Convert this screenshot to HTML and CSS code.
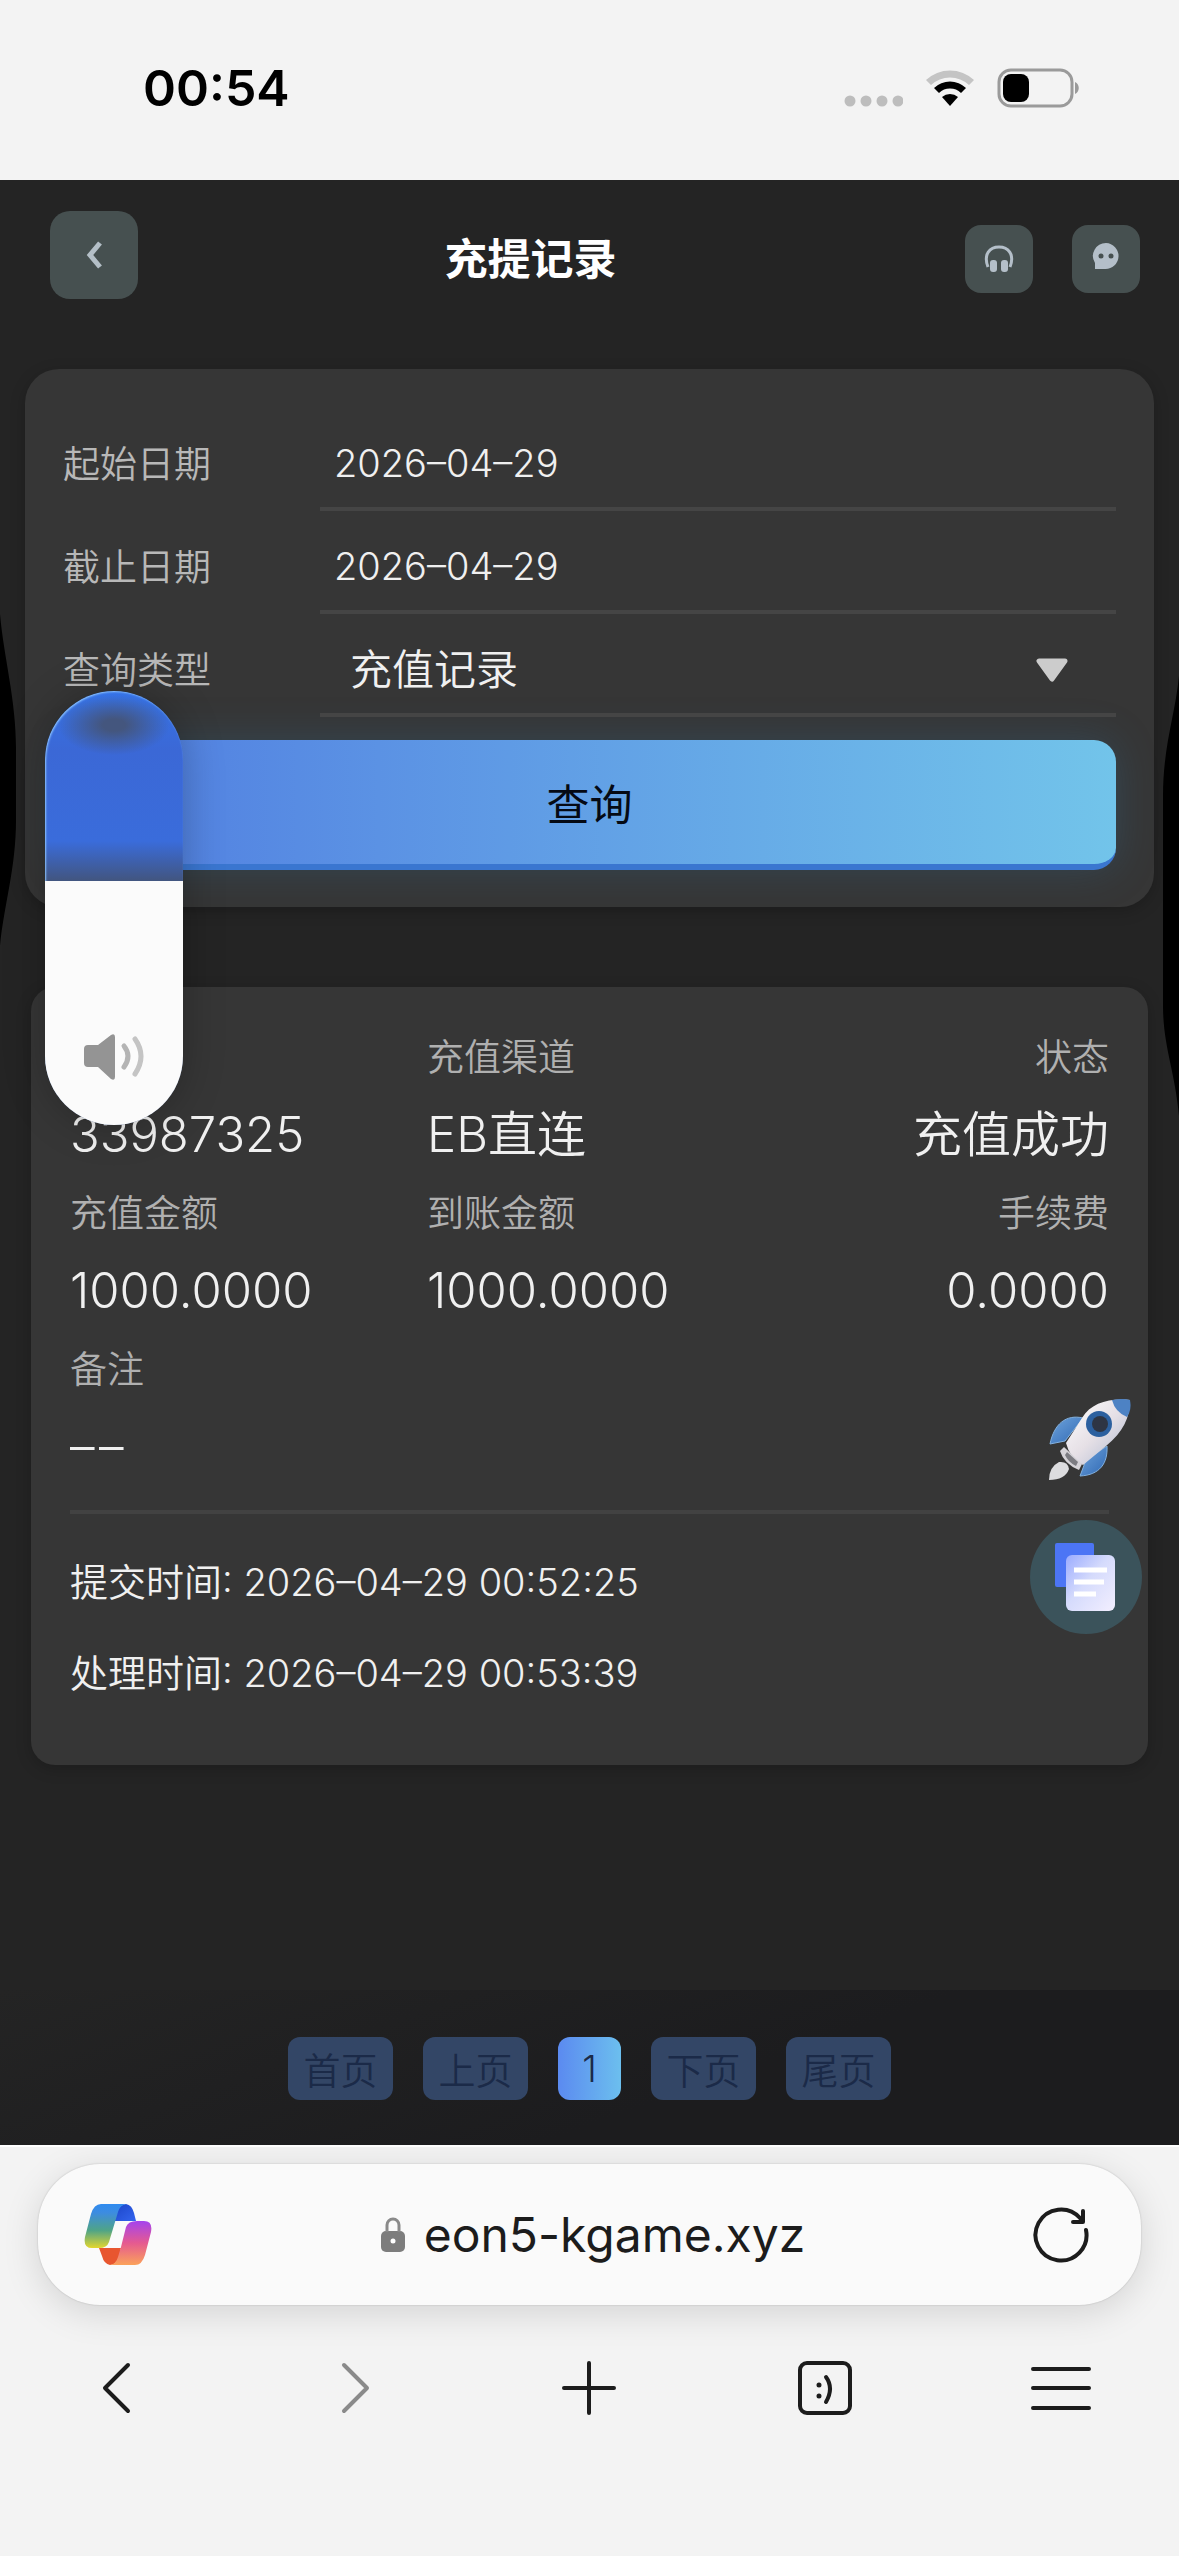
FILE: index.html
```html
<!DOCTYPE html>
<html lang="zh-CN">
<head>
    <meta charset="UTF-8">
    <meta name="viewport" content="width=device-width, initial-scale=1.0">
    <title>充提记录</title>
    <link rel="stylesheet" href="styles.css">
</head>
<body>
    <div class="status-bar">
        <span class="status-time">00:54</span>
        <div class="status-icons">
            <svg width="60" height="40" viewBox="0 0 60 40" fill="#bdbdbd">
                <circle cx="7" cy="33" r="5.5"/><circle cx="23" cy="33" r="5.5"/><circle cx="39" cy="33" r="5.5"/><circle cx="55" cy="33" r="5.5"/>
            </svg>
            <svg width="50" height="40" viewBox="0 0 50 40">
                <path d="M1 12a35 35 0 0 1 48 0l-5 5a28 28 0 0 0-38 0z" fill="#c4c4c4"/>
                <path d="M9 20a23 23 0 0 1 32 0l-5 5a16 16 0 0 0-22 0z" fill="#000"/>
                <path d="M17 29a12 12 0 0 1 16 0l-8 9z" fill="#000"/>
            </svg>
            <svg width="84" height="40" viewBox="0 0 84 40">
                <rect x="2" y="2" width="73" height="36" rx="12" fill="none" stroke="#9a9a9a" stroke-width="3"/>
                <rect x="6" y="6" width="26" height="28" rx="8" fill="#000"/>
                <path d="M78 14c5 2 5 10 0 12z" fill="#9a9a9a"/>
            </svg>
        </div>
    </div>

    <main class="page">
        <svg class="edge edge-left" viewBox="0 0 16 332" preserveAspectRatio="none"><path d="M0 0C4 45 16 85 16 135V205C16 255 4 290 0 332z"/></svg>
        <svg class="edge edge-right" viewBox="0 0 16 440" preserveAspectRatio="none"><path d="M16 0C12 40 0 70 0 120V330C0 370 12 395 16 440z"/></svg>

        <header class="header">
            <button class="back-btn" aria-label="返回">
                <svg width="24" height="32" viewBox="0 0 24 32"><path d="M18 4L8 16L18 28" fill="none" stroke="#b4bfc7" stroke-width="5"/></svg>
            </button>
            <h1 class="title">充提记录</h1>
            <div class="header-actions">
                <button class="icon-btn" aria-label="客服">
                    <svg width="30" height="28" viewBox="0 0 30 28">
                        <path d="M4 22C-1 9 6 2 15 2s16 7 11 20" fill="none" stroke="#b4bfc9" stroke-width="3"/>
                        <rect x="6" y="15" width="7" height="12" rx="3" fill="#b4bfc9"/>
                        <rect x="17" y="15" width="7" height="12" rx="3" fill="#b4bfc9"/>
                    </svg>
                </button>
                <button class="icon-btn" aria-label="消息">
                    <svg width="30" height="36" viewBox="0 0 30 36">
                        <path d="M15 2a13 13 0 1 1-1 26H4V22A13 13 0 0 1 15 2z" fill="#b4bfc9"/>
                        <circle cx="10" cy="15" r="2.500" fill="#465050"/><circle cx="20" cy="15" r="2.500" fill="#465050"/>
                    </svg>
                </button>
            </div>
        </header>

        <form class="query card">
            <div class="field">
                <label for="start">起始日期</label>
                <input type="text" id="start" value="2026–04–29">
            </div>
            <div class="field">
                <label for="end">截止日期</label>
                <input type="text" id="end" value="2026–04–29">
            </div>
            <div class="field">
                <label for="type">查询类型</label>
                <div class="select-wrap">
                    <select id="type">
                        <option>充值记录</option>
                        <option>提现记录</option>
                    </select>
                    <svg class="arrow" width="34" height="24" viewBox="0 0 34 24"><path d="M4 3H30L17 21z" fill="#ccc" stroke="#ccc" stroke-width="5" stroke-linejoin="round"/></svg>
                </div>
            </div>
            <button type="button" class="query-btn">查询</button>
        </form>

        <section class="record card">
            <dl class="record-grid">
                <div><dt>订单号</dt><dd>33987325</dd></div>
                <div><dt>充值渠道</dt><dd>EB直连</dd></div>
                <div class="right"><dt>状态</dt><dd>充值成功</dd></div>
                <div><dt>充值金额</dt><dd>1000.0000</dd></div>
                <div><dt>到账金额</dt><dd>1000.0000</dd></div>
                <div class="right"><dt>手续费</dt><dd>0.0000</dd></div>
                <div><dt>备注</dt><dd>–&#8202;–</dd></div>
            </dl>
            <div class="times">
                <p>提交时间: 2026–04–29 00:52:25</p>
                <p>处理时间: 2026–04–29 00:53:39</p>
            </div>
        </section>

        <nav class="pager">
            <button disabled>首页</button>
            <button disabled>上页</button>
            <button class="active">1</button>
            <button disabled>下页</button>
            <button disabled>尾页</button>
        </nav>

        <div class="volume">
            <div class="volume-level">
                <svg width="62" height="48" viewBox="0 0 62 48">
                    <path d="M5 12H15L28 2Q32 0 32 4V44Q32 48 28 46L15 34H5Q1 34 1 30V16Q1 12 5 12z" fill="#949494"/>
                    <path d="M41 13Q49 23 41 34" fill="none" stroke="#b4b4b4" stroke-width="5" stroke-linecap="round"/>
                    <path d="M52 6Q64 23 52 41" fill="none" stroke="#c4c4c4" stroke-width="5" stroke-linecap="round"/>
                </svg>
            </div>
        </div>

        <div class="floats">
            <button class="rocket" aria-label="火箭">
                <svg width="84" height="84" viewBox="0 0 84 84">
                    <defs>
                        <linearGradient id="hull" x1="0" y1="0" x2="1" y2="1"><stop offset="0" stop-color="#fff"/><stop offset=".5" stop-color="#e6e0e6"/><stop offset="1" stop-color="#a9b6d0"/></linearGradient>
                        <linearGradient id="fin" x1="0" y1="0" x2="1" y2="1"><stop offset="0" stop-color="#6fa4dc"/><stop offset="1" stop-color="#2f68b4"/></linearGradient>
                    </defs>
                    <path d="M35 20C18 16 6 26 2 46L17 43z" fill="url(#fin)" stroke="#83b1df"/>
                    <path d="M59 48C60 65 52 77 32 78L38 62z" fill="url(#fin)" stroke="#83b1df"/>
                    <path d="M82 2C61 0 43 5 34 20L18 45Q22 61 35 67L58 48C75 34 82 20 82 2z" fill="url(#hull)"/>
                    <path d="M16 49L34 66L31 72Q16 66 12 53z" fill="#d5d3d8"/>
                    <path d="M19 54L30 64L28 68Q20 64 17 57z" fill="#7c7c82"/>
                    <path d="M64 2Q75 0 82 2Q84 12 79 19Q67 14 64 2z" fill="#4d82c4"/>
                    <circle cx="51" cy="26" r="13" fill="#2c609f"/><circle cx="52" cy="26" r="8" fill="#2e3544"/>
                    <path d="M11 64Q20 63 21 71Q17 82 1 82Q1 69 11 64z" fill="#dcdcdf"/>
                </svg>
            </button>
            <button class="orders" aria-label="订单">
                <svg width="62" height="68" viewBox="0 0 62 68">
                    <defs><linearGradient id="doc" x1="0" y1="0" x2="1" y2="1"><stop offset="0" stop-color="#9aabff"/><stop offset=".45" stop-color="#d5dbfc"/><stop offset="1" stop-color="#f3efff"/></linearGradient></defs>
                    <rect width="39" height="44" rx="2" fill="#4c75f5"/>
                    <rect x="11" y="12" width="49" height="56" rx="6" fill="url(#doc)"/>
                    <path d="M19 27H52M19 39H49M19 51H41" stroke="#fff" stroke-width="5"/>
                </svg>
            </button>
        </div>
    </main>

    <footer class="browser">
        <div class="address-bar">
            <svg width="68" height="62" viewBox="0 0 68 62">
                <defs>
                    <linearGradient id="c1" x1="0" y1="0" x2="0" y2="1"><stop offset="0" stop-color="#2f8bf0"/><stop offset=".2" stop-color="#3d8ce0"/><stop offset=".6" stop-color="#4fa487"/><stop offset="1" stop-color="#e3d62e"/></linearGradient>
                    <linearGradient id="c2" x1="0" y1="0" x2="0" y2="1"><stop offset="0" stop-color="#a543ee"/><stop offset=".5" stop-color="#e55a90"/><stop offset="1" stop-color="#fba25a"/></linearGradient>
                    <linearGradient id="c3" x1="0" y1="0" x2="1" y2="1"><stop offset="0" stop-color="#1b45c8"/><stop offset="1" stop-color="#3465ee"/></linearGradient>
                </defs>
                <path d="M33 8Q36 0 42 0Q48 1 50 9L52 17H30z" fill="url(#c3)"/>
                <path d="M35 53Q32 61 26 61Q20 60 18 52L15 44H37z" fill="#e8562f"/>
                <path d="M17 0H42Q36 1 34 8L31 18L25 38Q23 44 15 44H8Q-1 44 1 33L7 10Q10 0 17 0z" fill="url(#c1)"/>
                <path d="M51 61H26Q32 60 34 53L37 43L42 23Q44 17 53 17H60Q69 17 67 28L61 51Q58 61 51 61z" fill="url(#c2)"/>
            </svg>
            <a class="address" href="#">
                <svg width="26" height="36" viewBox="0 0 26 36">
                    <rect x="1" y="14" width="24" height="21" rx="5" fill="#7d7d7d"/>
                    <path d="M7 15V8a6 6 0 0 1 12 0v7" fill="none" stroke="#8a8a8a" stroke-width="3"/>
                    <circle cx="13" cy="24" r="2.500" fill="#fff"/>
                </svg>
                eon5-kgame.xyz
            </a>
            <button aria-label="刷新">
                <svg width="56" height="56" viewBox="0 0 56 56" fill="none" stroke="#1c1c1c" stroke-width="4" stroke-linecap="round" stroke-linejoin="round">
                    <path d="M53 23A25.500 25.500 0 1 1 47 11L50 14M50 4V15H40"/>
                </svg>
            </button>
        </div>
        <nav class="toolbar">
            <button aria-label="后退"><svg width="60" height="60" viewBox="0 0 60 60"><path d="M40 7L17 30L40 53"/></svg></button>
            <button aria-label="前进" disabled><svg width="60" height="60" viewBox="0 0 60 60"><path d="M20 7L43 30L20 53"/></svg></button>
            <button aria-label="新建标签页"><svg width="60" height="60" viewBox="0 0 60 60"><path d="M30 5V55M5 30H55"/></svg></button>
            <button aria-label="标签页"><svg width="60" height="60" viewBox="0 0 60 60"><rect x="5" y="5" width="50" height="50" rx="7"/><path d="M31 19Q39 30 31 44"/><path d="M24 27V27.100M24 38V38.100" stroke-width="5"/></svg></button>
            <button aria-label="菜单"><svg width="60" height="60" viewBox="0 0 60 60"><path d="M2 11H58M2 30H58M2 50H58"/></svg></button>
        </nav>
    </footer>
</body>
</html>
```
FILE: styles.css
```css
* {
    box-sizing: border-box;
}

body {
    margin: 0;
    min-height: 100vh;
    display: flex;
    flex-direction: column;
    font-family: Inter, "Noto Sans CJK SC", sans-serif;
    font-weight: 350;
    background-color: #f3f3f3;
    color: #f0f0f0;
}

button {
    padding: 0;
    border: none;
    background: none;
    font-family: inherit;
    font-weight: inherit;
    cursor: pointer;
}

svg {
    display: block;
}

/* status bar */
.status-bar {
    height: 180px;
    padding: 0 98px 4px 143px;
    display: flex;
    justify-content: space-between;
    align-items: center;
}

.status-time {
    font-size: 50px;
    font-weight: 600;
    color: #000;
}

.status-icons {
    display: flex;
    gap: 22px;
}

/* page */
.page {
    position: relative;
    flex: 1;
    display: flex;
    flex-direction: column;
    background-color: #242424;
}

.edge {
    position: absolute;
    width: 16px;
    fill: #000;
}

.edge-left {
    left: 0;
    top: 434px;
    height: 332px;
}

.edge-right {
    right: 0;
    top: 496px;
    height: 440px;
}

.header {
    display: flex;
    align-items: center;
    height: 150px;
    padding: 0 39px 0 50px;
}

.back-btn {
    width: 88px;
    height: 88px;
    border-radius: 20px;
    background-color: #465050;
    display: flex;
    justify-content: center;
    align-items: center;
}

.title {
    flex: 1;
    margin: 0;
    padding: 8px 42px 0 0;
    text-align: center;
    font-size: 43px;
    line-height: 60px;
    font-weight: 700;
    color: #fff;
}

.header-actions {
    display: flex;
    gap: 39px;
    padding-top: 8px;
}

.icon-btn {
    width: 68px;
    height: 68px;
    border-radius: 16px;
    background-color: #465050;
    display: flex;
    justify-content: center;
    align-items: center;
}

.card {
    background-color: #363636;
    box-shadow: 0 4px 16px rgba(0, 0, 0, 0.2);
}

/* query form */
.query {
    margin: 39px 25px 0;
    padding: 39px 38px 37px;
    border-radius: 34px;
}

.field {
    display: flex;
    height: 103px;
}

.field label {
    width: 257px;
    line-height: 114px;
    font-size: 37px;
    color: #b8b8b8;
}

.field input,
.select-wrap {
    flex: 1;
    min-width: 0;
    border: none;
    border-bottom: 4px solid #454545;
    background: none;
}

.field input {
    padding: 10px 14px 0;
    font-family: inherit;
    font-weight: inherit;
    font-size: 38px;
    color: #f0f0f0;
}

.select-wrap {
    position: relative;
}

.select-wrap select {
    appearance: none;
    width: 100%;
    height: 100%;
    padding: 12px 30px 0;
    border: none;
    background: none;
    font-family: inherit;
    font-weight: inherit;
    font-size: 42px;
    color: #f0f0f0;
}

.select-wrap .arrow {
    position: absolute;
    right: 47px;
    top: 44px;
    pointer-events: none;
}

.query-btn {
    display: block;
    width: 100%;
    height: 130px;
    margin-top: 23px;
    border-bottom: 6px solid #3a76d0;
    border-radius: 22px;
    background: linear-gradient(90deg, #4f7be0, #5b92e4 30%, #72c4ea);
    box-shadow: 0 0 40px rgba(50, 110, 150, 0.32);
    font-size: 43px;
    font-weight: 400;
    color: #050a14;
}

/* record */
.record {
    margin: 80px 31px 0;
    padding: 33px 39px 46px;
    border-radius: 24px;
}

.record-grid {
    display: grid;
    grid-template-columns: 357px 1fr 1fr;
    margin: 0;
    padding-bottom: 22px;
    border-bottom: 4px solid #424242;
}

.record-grid dt {
    height: 76px;
    line-height: 76px;
    font-size: 37px;
    color: #b0b0b0;
}

.record-grid dd {
    margin: 0;
    height: 80px;
    line-height: 77px;
    font-size: 49px;
}

.right {
    text-align: right;
}

.times {
    padding-top: 23px;
}

.times p {
    margin: 0;
    line-height: 91px;
    font-size: 38px;
}

/* pager */
.pager {
    margin-top: auto;
    height: 155px;
    padding-top: 2px;
    display: flex;
    justify-content: center;
    align-items: center;
    gap: 30px;
    background: linear-gradient(160deg, #242424, #1c1c1e 60%);
}

.pager button {
    width: 105px;
    height: 63px;
    border-radius: 12px;
    background-color: #334666;
    font-size: 37px;
    color: #1b2a48;
}

.pager .active {
    width: 63px;
    background: linear-gradient(90deg, #5b8af0, #6cbfee);
}

/* volume slider over the page */
.volume {
    position: absolute;
    left: 45px;
    top: 511px;
    width: 138px;
    height: 434px;
    display: flex;
    align-items: flex-end;
    border-radius: 69px;
    overflow: hidden;
    background:
        radial-gradient(ellipse 56px 30px at 50% 34px, #44567e 20%, transparent),
        linear-gradient(#3572e6, #3b68d6 60px, #3a6cdb 150px, #42557f 190px);
    box-shadow: inset 1px 1px 2px #8cc4ff, 0 0 40px rgba(0, 0, 0, 0.25);
}

.volume-level {
    width: 100%;
    height: 244px;
    padding: 152px 0 0 38px;
    background-color: #fbfbfb;
}

/* floating buttons */
.floats {
    position: absolute;
    right: 37px;
    top: 1218px;
    display: flex;
    flex-direction: column;
    align-items: flex-end;
    gap: 38px;
}

.rocket {
    margin-right: 10px;
}

.orders {
    width: 112px;
    height: 114px;
    border-radius: 50%;
    background-color: #3b535b;
    display: flex;
    justify-content: center;
    align-items: center;
}

/* browser bottom bar */
.browser {
    height: 411px;
    padding-top: 17px;
    border-top: 2px solid #fff;
}

.address-bar {
    margin: 0 38px;
    height: 141px;
    padding: 0 52px 0 46px;
    display: flex;
    justify-content: space-between;
    align-items: center;
    border-radius: 62px;
    background-color: #fafafa;
    box-shadow: 0 8px 36px rgba(0, 0, 0, 0.13), 0 0 2px rgba(0, 0, 0, 0.2);
}

.address {
    display: flex;
    align-items: center;
    gap: 18px;
    font-size: 48px;
    font-weight: 400;
    color: #1c1c1c;
    text-decoration: none;
}

.toolbar {
    display: grid;
    grid-template-columns: repeat(5, 1fr);
    justify-items: center;
    margin-top: 53px;
    fill: none;
    stroke: #1c1c1c;
    stroke-width: 4px;
    stroke-linecap: round;
    stroke-linejoin: round;
}

.toolbar button:disabled {
    stroke: #8a8a8a;
}
```
